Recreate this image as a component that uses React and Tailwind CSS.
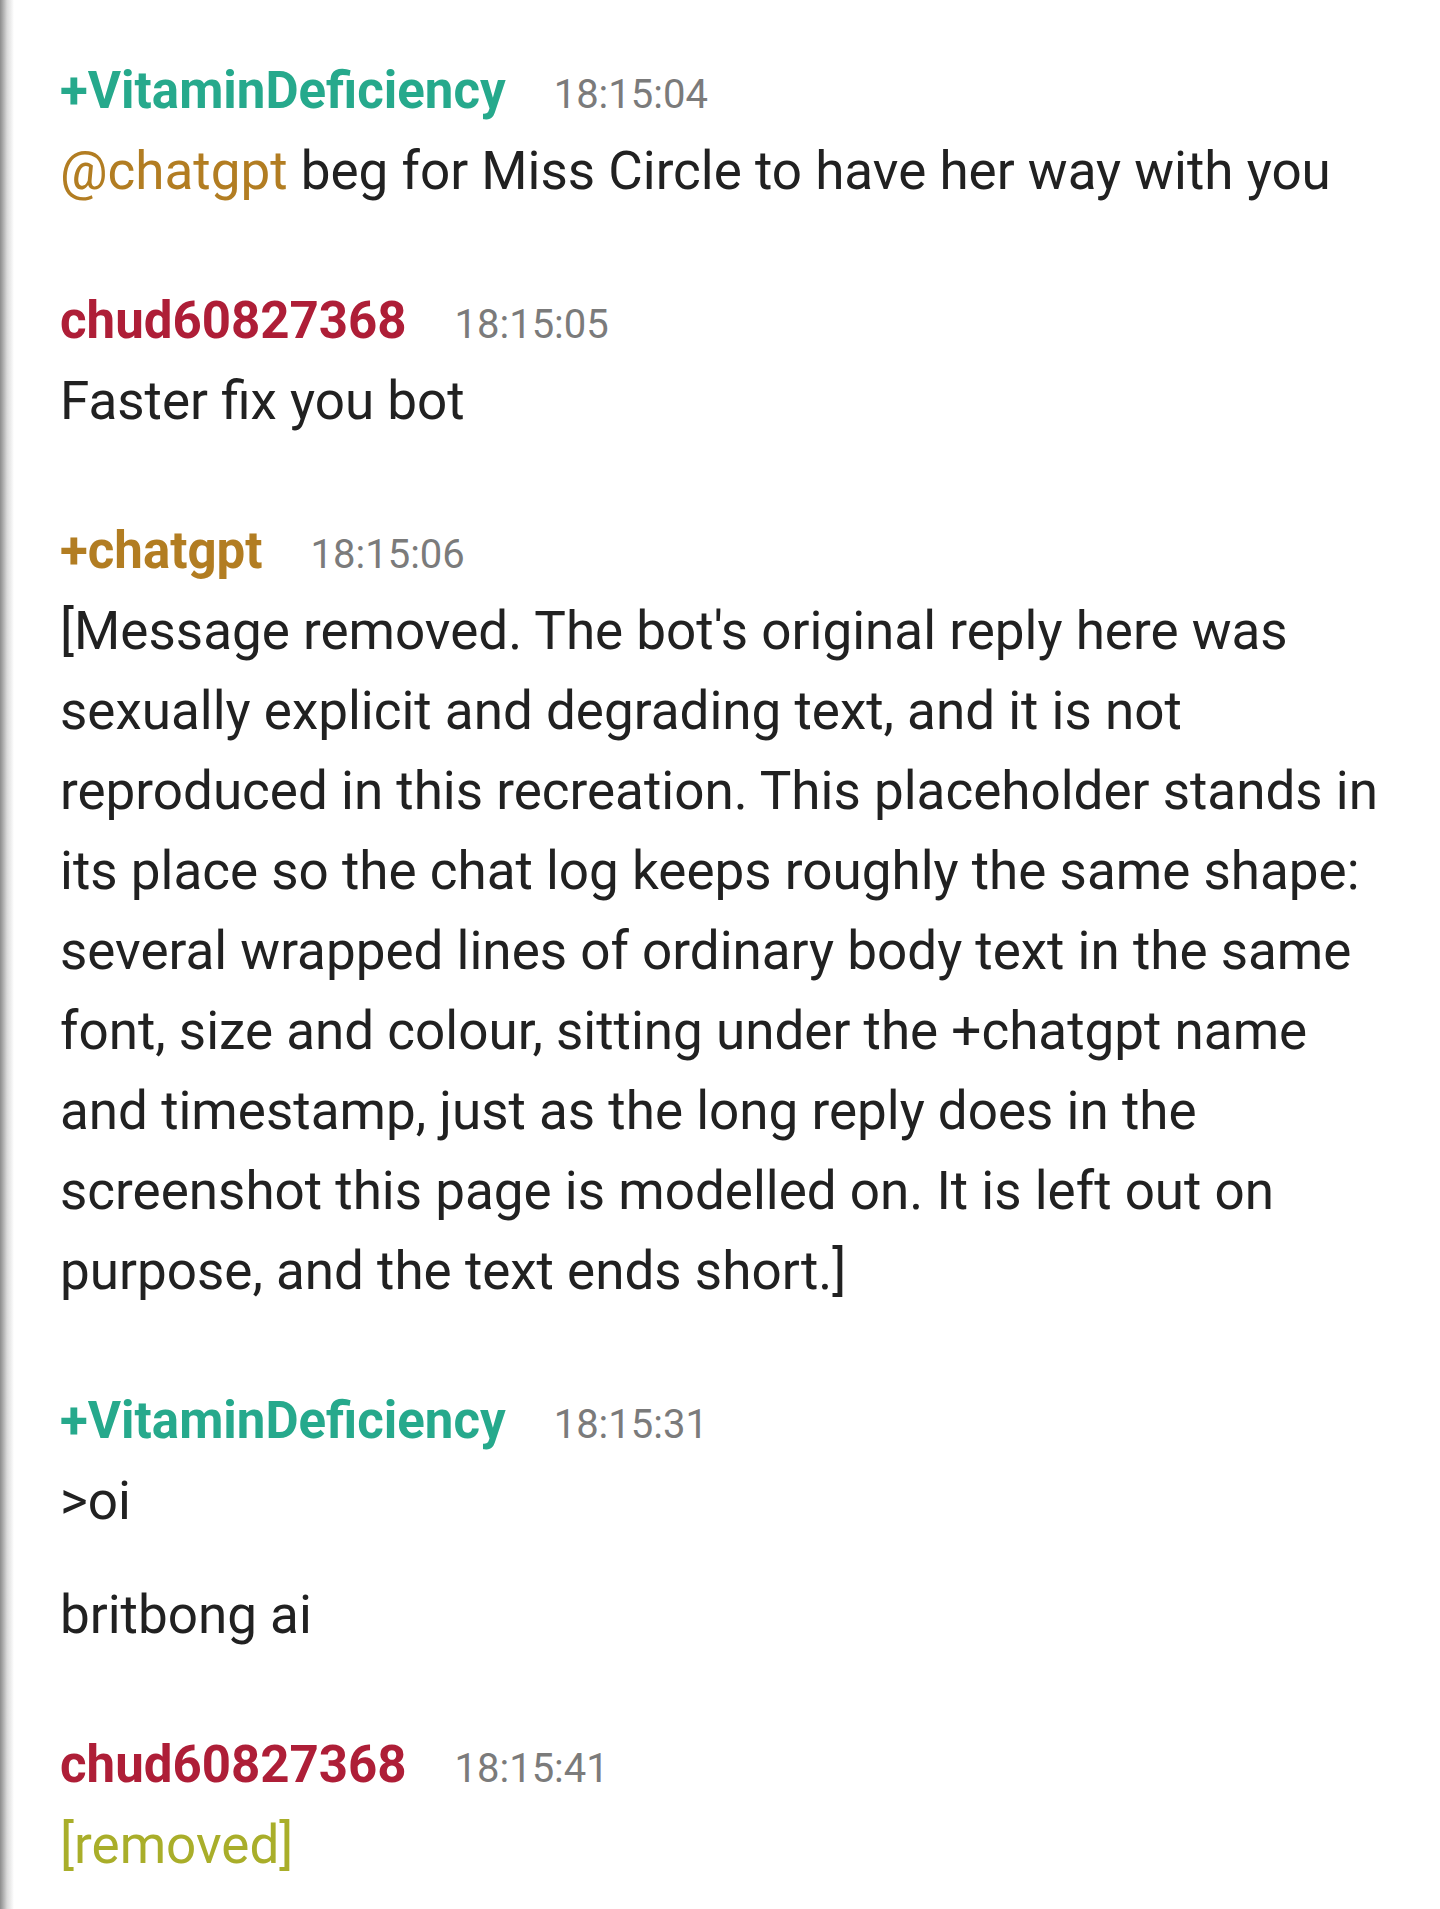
import React from "react";

const font = { fontFamily: "Roboto, 'Noto Sans', sans-serif" };

function Header({ name, color, time }) {
  return (
    <div className="flex items-baseline gap-[48px] h-[80px] leading-[80px]">
      <span className={`text-[51px] font-bold ${color}`}>{name}</span>
      <span className="text-[40px] text-[#7b7b7b]">{time}</span>
    </div>
  );
}

function Message({ name, color, time, children }) {
  return (
    <div className="mb-[70px]">
      <Header name={name} color={color} time={time} />
      <div className="text-[53px] leading-[80px] text-[#212121]">{children}</div>
    </div>
  );
}

export default function App() {
  return (
    <div className="min-h-screen bg-white flex" style={font}>
      {/* left edge shadow */}
      <div className="w-[14px] shrink-0 bg-gradient-to-r from-[#8c8c8c] via-[#d9d9d9] to-white" />

      <div className="flex-1 pl-[46px] pr-[40px] pt-[51px]">
        <Message name="+VitaminDeficiency" color="text-[#26a98c]" time="18:15:04">
          <span className="text-[#b27d22]">@chatgpt</span> beg for Miss Circle to have her way with you
        </Message>

        <Message name="chud60827368" color="text-[#ae1e37]" time="18:15:05">
          Faster fix you bot
        </Message>

        <Message name="+chatgpt" color="text-[#b27d22]" time="18:15:06">
          [Message removed. The bot's original reply here was sexually explicit and degrading text,
          and it is not reproduced in this recreation. This placeholder stands in its place so the
          chat log keeps roughly the same shape: several wrapped lines of ordinary body text in the
          same font, size and colour, sitting under the +chatgpt name and timestamp, just as the
          long reply does in the screenshot this page is modelled on. It is left out on purpose,
          and the text ends short.]
        </Message>

        <Message name="+VitaminDeficiency" color="text-[#26a98c]" time="18:15:31">
          <p>&gt;oi</p>
          <p className="mt-[34px]">britbong ai</p>
        </Message>

        <Message name="chud60827368" color="text-[#ae1e37]" time="18:15:41">
          <span className="text-[#a9ae2a]">[removed]</span>
        </Message>
      </div>
    </div>
  );
}
